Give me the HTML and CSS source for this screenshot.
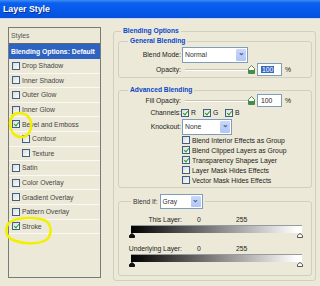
FILE: index.html
```html
<!DOCTYPE html>
<html lang="en">
  <head>
    <meta charset="UTF-8" />
    <title>Layer Style</title>
    <link rel="stylesheet" href="styles.css">
  </head>
  <body>
    <div class="titlebar">Layer Style</div>
    <div class="main">
      <div class="styles">
        <div class="styles-head">Styles</div>
        <div class="style-item selected">Blending Options: Default</div>
        <div class="style-item"><span class="cb"></span>Drop Shadow</div>
        <div class="style-item"><span class="cb"></span>Inner Shadow</div>
        <div class="style-item"><span class="cb"></span>Outer Glow</div>
        <div class="style-item"><span class="cb"></span>Inner Glow</div>
        <div class="style-item"><span class="cb on"></span>Bevel and Emboss</div>
        <div class="style-item sub"><span class="cb"></span>Contour</div>
        <div class="style-item sub"><span class="cb"></span>Texture</div>
        <div class="style-item"><span class="cb"></span>Satin</div>
        <div class="style-item"><span class="cb"></span>Color Overlay</div>
        <div class="style-item"><span class="cb"></span>Gradient Overlay</div>
        <div class="style-item"><span class="cb"></span>Pattern Overlay</div>
        <div class="style-item"><span class="cb on"></span>Stroke</div>
      </div>

      <div class="panel">
        <fieldset class="group outer">
          <legend>Blending Options</legend>

          <!-- General -->
          <fieldset class="group general">
            <legend>General Blending</legend>
            <div class="row row-select">
              <span class="label">Blend Mode:</span>
              <div class="select mode"><span>Normal</span><span class="drop">&#8964;</span></div>
            </div>
            <div class="row row-slider">
              <span class="label">Opacity:</span>
              <div class="slider">
                <svg class="thumb" width="7" height="9" viewBox="0 0 7 9"><path d="M0.5 3.5 L3.5 0.5 L6.5 3.5 V8.5 H0.5 Z" fill="#fff" stroke="#5d7f52"/><rect x="1" y="5" width="5" height="3" fill="#2f9b3a"/></svg>
              </div>
              <div class="num"><span class="hl">100</span></div>
              <span class="pct">%</span>
            </div>
          </fieldset>

          <!-- Advanced -->
          <fieldset class="group advanced">
            <legend>Advanced Blending</legend>
            <div class="row row-slider">
              <span class="label">Fill Opacity:</span>
              <div class="slider">
                <svg class="thumb" width="7" height="9" viewBox="0 0 7 9"><path d="M0.5 3.5 L3.5 0.5 L6.5 3.5 V8.5 H0.5 Z" fill="#fff" stroke="#5d7f52"/><rect x="1" y="5" width="5" height="3" fill="#2f9b3a"/></svg>
              </div>
              <div class="num">100</div>
              <span class="pct">%</span>
            </div>
            <div class="row row-channels">
              <span class="label">Channels:</span>
              <span class="channel"><span class="cb on"></span>R</span>
              <span class="channel"><span class="cb on"></span>G</span>
              <span class="channel"><span class="cb on"></span>B</span>
            </div>
            <div class="row row-knock">
              <span class="label">Knockout:</span>
              <div class="select knock"><span>None</span><span class="drop">&#8964;</span></div>
            </div>
            <div class="check-row"><span class="cb"></span>Blend Interior Effects as Group</div>
            <div class="check-row"><span class="cb on"></span>Blend Clipped Layers as Group</div>
            <div class="check-row"><span class="cb on"></span>Transparency Shapes Layer</div>
            <div class="check-row"><span class="cb"></span>Layer Mask Hides Effects</div>
            <div class="check-row"><span class="cb"></span>Vector Mask Hides Effects</div>
          </fieldset>

          <!-- Blend If -->
          <fieldset class="group blendif">
            <legend><span class="plain">Blend If:</span><div class="select gray"><span>Gray</span><span class="drop">&#8964;</span></div></legend>
            <div class="layer-row first">
              <span class="label">This Layer:</span>
              <span class="lo">0</span>
              <span class="hi">255</span>
            </div>
            <div class="bar"></div>
            <div class="thumbs">
              <svg width="6" height="5" viewBox="0 0 6 5"><path d="M0.5 4.5 V2.5 L3 0.5 L5.5 2.5 V4.5 Z" fill="#111" stroke="#111"/></svg>
              <svg width="6" height="5" viewBox="0 0 6 5"><path d="M0.5 4.5 V2.5 L3 0.5 L5.5 2.5 V4.5 Z" fill="#fff" stroke="#555"/></svg>
            </div>
            <div class="layer-row">
              <span class="label">Underlying Layer:</span>
              <span class="lo">0</span>
              <span class="hi">255</span>
            </div>
            <div class="bar"></div>
            <div class="thumbs">
              <svg width="6" height="5" viewBox="0 0 6 5"><path d="M0.5 4.5 V2.5 L3 0.5 L5.5 2.5 V4.5 Z" fill="#111" stroke="#111"/></svg>
              <svg width="6" height="5" viewBox="0 0 6 5"><path d="M0.5 4.5 V2.5 L3 0.5 L5.5 2.5 V4.5 Z" fill="#fff" stroke="#555"/></svg>
            </div>
          </fieldset>
        </fieldset>
      </div>
    </div>

    <!-- hand drawn highlight circles -->
    <svg class="marks" width="320" height="286" viewBox="0 0 320 286">
      <path d="M14 114 C22 111 30 115 31 123 C32 132 27 138 20 137 C13 136 10 130 10 123 C10 118 12 115 17 113" />
      <path d="M12 221 C20 217 38 217 46 221 C52 225 52 236 46 240 C38 245 20 244 11 239 C5 235 5 226 10 222" />
    </svg>
  </body>
</html>
```

FILE: styles.css
```css
* {
  margin: 0;
  padding: 0;
  box-sizing: border-box;
}

body {
  width: 320px;
  height: 286px;
  overflow: hidden;
  position: relative;
  background: #ece9d8;
  font-family: 'Liberation Sans', Arial, sans-serif;
  font-size: 6.8px;
  color: #222;
}

/* Title bar */
.titlebar {
  height: 19px;
  padding: 5px 0 0 3px;
  font-size: 8.8px;
  line-height: 9px;
  font-weight: bold;
  color: #fff;
  text-shadow: 1px 1px 0 #0a2f8a;
  background: linear-gradient(#3d8ff6 0, #0c5fee 3px, #0658ea 60%, #0650dc 100%);
  border-bottom: 1px solid #cbd6ee;
}

.main {
  display: flex;
}

/* Styles list */
.styles {
  margin: 8px 0 0 8px;
  width: 93px;
  height: 251px;
  border: 1px solid #7a7a7a;
}

.styles-head {
  height: 16px;
  line-height: 15px;
  padding-left: 2px;
  color: #555;
  border-bottom: 1px solid #666;
}

.style-item {
  height: 14.6px;
  display: flex;
  align-items: center;
  gap: 2px;
  padding-left: 3px;
  color: #444;
  border-bottom: 1px solid #faf9f3;
}

.style-item.sub {
  padding-left: 13px;
}

.style-item.selected {
  height: 15px;
  padding-left: 2px;
  background: #2f63c2;
  color: #fff;
  font-weight: bold;
  border-bottom: none;
}

/* XP checkbox */
.cb {
  position: relative;
  flex: none;
  width: 8px;
  height: 8px;
  border: 1px solid #3c5f8c;
  background: linear-gradient(135deg, #dedcd3, #fbfbf8);
}

.cb.on::after {
  content: "";
  position: absolute;
  left: 2px;
  top: 0;
  width: 2px;
  height: 4px;
  border: solid #21a121;
  border-width: 0 1.5px 1.5px 0;
  transform: rotate(40deg);
}

/* Right side */
.panel {
  margin: 8px 0 0 12px;
}

.group {
  border: 1px solid #d0d0bf;
  border-radius: 3px;
  min-width: 0;
}

.group legend {
  margin-left: 7px;
  padding: 0 2px;
  line-height: 8px;
  font-size: 6.7px;
  font-weight: bold;
  color: #0a46c8;
}

.outer {
  width: 203px;
  height: 254px;
}

.outer > .group {
  margin: 2px 3px 0 4px;
}

.general legend,
.advanced legend {
  margin-left: 9px;
}

.general {
  padding-bottom: 1px;
}

.row {
  display: flex;
  align-items: center;
}

.label {
  width: 62px;
  text-align: right;
  flex: none;
}

.row-select {
  height: 17px;
  margin-top: 1px;
}

.row-slider {
  height: 13px;
}

.select {
  display: flex;
  align-items: center;
  justify-content: space-between;
  background: #fff;
  border: 1px solid #7f9db9;
  padding-left: 2px;
  color: #333;
}

.select .drop {
  width: 10px;
  align-self: stretch;
  margin: 1px;
  border-radius: 1px;
  background: linear-gradient(#c9d8fb, #b1c6f6);
  color: #4d6185;
  font-size: 8px;
  line-height: 8px;
  text-align: center;
  font-weight: bold;
}

.mode {
  margin-left: 1px;
  width: 66px;
  height: 16px;
}

.slider {
  position: relative;
  margin-left: 4px;
  width: 70px;
  height: 9px;
  display: flex;
  align-items: center;
  justify-content: flex-end;
  background: linear-gradient(transparent 4px, #c5c2b2 4px, #c5c2b2 5px, #fff 5px, #fff 6px, transparent 6px);
}

.thumb {
  display: block;
}

.num {
  margin-left: 2px;
  width: 25px;
  height: 13px;
  border: 1px solid #7f9db9;
  background: #fff;
  line-height: 11px;
  padding-left: 3px;
}

.hl {
  background: #316ac5;
  color: #fff;
  padding: 0 1px;
}

.pct {
  margin-left: 3px;
}

/* Advanced */
.advanced {
  margin-top: 8px !important;
  padding-bottom: 2px;
}

.row-channels {
  height: 11px;
}

.channel {
  display: flex;
  align-items: center;
  gap: 2px;
  width: 22px;
}

.row-channels .channel:first-of-type {
  margin-left: 1px;
}

.row-knock {
  height: 17px;
}

.knock {
  margin-left: 1px;
  width: 50px;
  height: 16px;
}

.check-row {
  height: 10px;
  display: flex;
  align-items: center;
  gap: 2px;
  padding-left: 63px;
}

/* Blend If */
.blendif {
  margin-top: 6px !important;
  height: 82px;
}

.blendif legend {
  margin-left: 12px;
  display: flex;
  align-items: center;
  gap: 2px;
  font-weight: normal;
  color: #333;
  line-height: 15px;
}

.gray {
  width: 43px;
  height: 15px;
}

.layer-row {
  display: flex;
  align-items: center;
  height: 10px;
  margin-top: 5px;
}

.layer-row .label {
  width: 63px;
}

.layer-row .lo {
  margin-left: 15px;
  width: 39px;
}

.bar {
  margin: 1px 0 0 12px;
  width: 171px;
  height: 8px;
  border-top: 1px solid #9a9a9a;
  background: linear-gradient(90deg, #000, #fff 97%);
}

.thumbs {
  display: flex;
  justify-content: space-between;
  margin-left: 10px;
  width: 174px;
  height: 5px;
}

.thumbs svg {
  display: block;
}

/* Annotation overlay */
.marks {
  position: absolute;
  left: 0;
  top: 0;
  pointer-events: none;
}

.marks path {
  fill: none;
  stroke: #f2f000;
  stroke-width: 2.6;
  stroke-linecap: round;
}
```
